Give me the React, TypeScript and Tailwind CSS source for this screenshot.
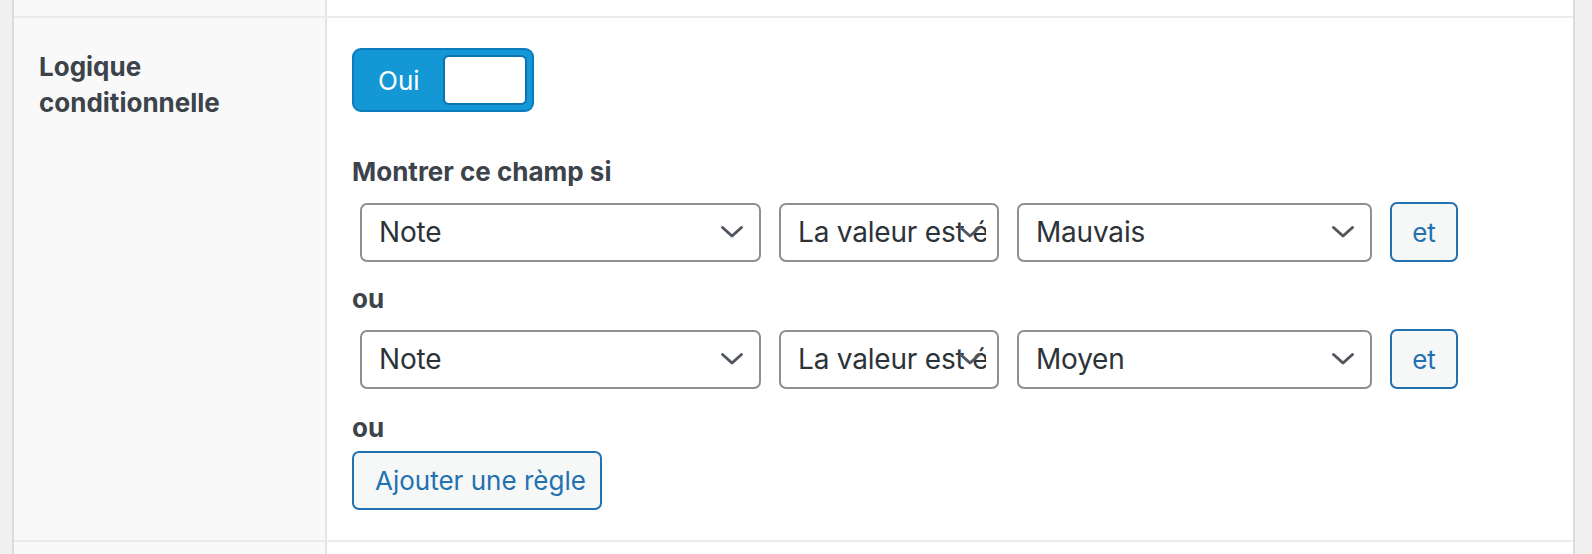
import React from "react";

const Chevron = () => (
  <svg
    width="24"
    height="14"
    viewBox="0 0 24 14"
    fill="none"
    className="pointer-events-none absolute right-[15px] top-1/2 -translate-y-1/2"
  >
    <path d="M2.5 2.5L12 11L21.5 2.5" stroke="#50575e" strokeWidth="3" strokeLinecap="round" strokeLinejoin="round" />
  </svg>
);

function FakeSelect({value, width}: {value: string; width: string}) {
  return (
    <div className={`relative h-[59px] shrink-0 rounded-[7px] border-2 border-[#8c8f94] bg-white pl-[17px] ${width}`}>
      <div className="mr-[11px] h-full overflow-hidden whitespace-nowrap text-[28px] leading-[55px] tracking-[-0.2px] text-[#2c3338]">
        {value}
      </div>
      <Chevron />
    </div>
  );
}

function RuleRow({value}: {value: string}) {
  return (
    <div className="flex items-center gap-[18px] pl-[8px]">
      <FakeSelect width="w-[401px]" value="Note" />
      <FakeSelect width="w-[220px]" value="La valeur est égale à" />
      <FakeSelect width="w-[355px]" value={value} />
      <button className="h-[60px] w-[68px] shrink-0 rounded-[7px] border-2 border-[#2271b1] bg-[#f6f7f7] text-[26px] text-[#2271b1]">
        et
      </button>
    </div>
  );
}

export default function App() {
  return (
    <div className="flex h-[554px] w-[1592px] overflow-hidden bg-[#f0f0f1] font-[Inter,'Liberation_Sans',sans-serif]">
      <div className="w-[12px] shrink-0" />
      <div className="flex w-[1563px] shrink-0 flex-col border-x-2 border-[#dcdcde]">
        {/* previous row (cut off) */}
        <div className="flex h-[16px] shrink-0">
          <div className="w-[313px] shrink-0 border-r-2 border-[#e2e4e7] bg-[#f9f9f9]" />
          <div className="flex-1 bg-white" />
        </div>

        <div className="flex h-[526px] shrink-0 border-y-2 border-[#ebebeb]">
          <div className="w-[313px] shrink-0 border-r-2 border-[#e2e4e7] bg-[#f9f9f9] pl-[25px] pt-[31px]">
            <div className="text-[26px] font-bold leading-[36px] text-[#3c434a]">
              Logique
              <br />
              conditionnelle
            </div>
          </div>

          <div className="flex-1 bg-white pl-[25px] pt-[30px]">
            <div className="flex h-[64px] w-[182px] items-center rounded-[9px] border-2 border-[#0a7cbc] bg-[#1497d5] pl-[24px] pr-[5px]">
              <span className="flex-1 text-[26px] text-white">Oui</span>
              <div className="h-[50px] w-[84px] rounded-[6px] border-2 border-[#0b74b0] bg-white" />
            </div>

            <div className="mt-[44px] text-[26px] font-bold leading-[32px] text-[#3c434a]">Montrer ce champ si</div>

            <div className="mt-[14px]">
              <RuleRow value="Mauvais" />
            </div>

            <div className="mt-[21px] text-[26px] font-bold leading-[32px] text-[#3c434a]">ou</div>

            <div className="mt-[14px]">
              <RuleRow value="Moyen" />
            </div>

            <div className="mt-[23px] text-[26px] font-bold leading-[32px] text-[#3c434a]">ou</div>

            <button className="mt-[7px] h-[59px] w-[250px] rounded-[7px] border-2 border-[#2271b1] bg-[#f6f7f7] pl-[21px] text-left text-[26px] text-[#2271b1]">
              Ajouter une règle
            </button>
          </div>
        </div>

        {/* next row (cut off) */}
        <div className="flex flex-1">
          <div className="w-[313px] shrink-0 border-r-2 border-[#e2e4e7] bg-[#f9f9f9]" />
          <div className="flex-1 bg-white" />
        </div>
      </div>
    </div>
  );
}
